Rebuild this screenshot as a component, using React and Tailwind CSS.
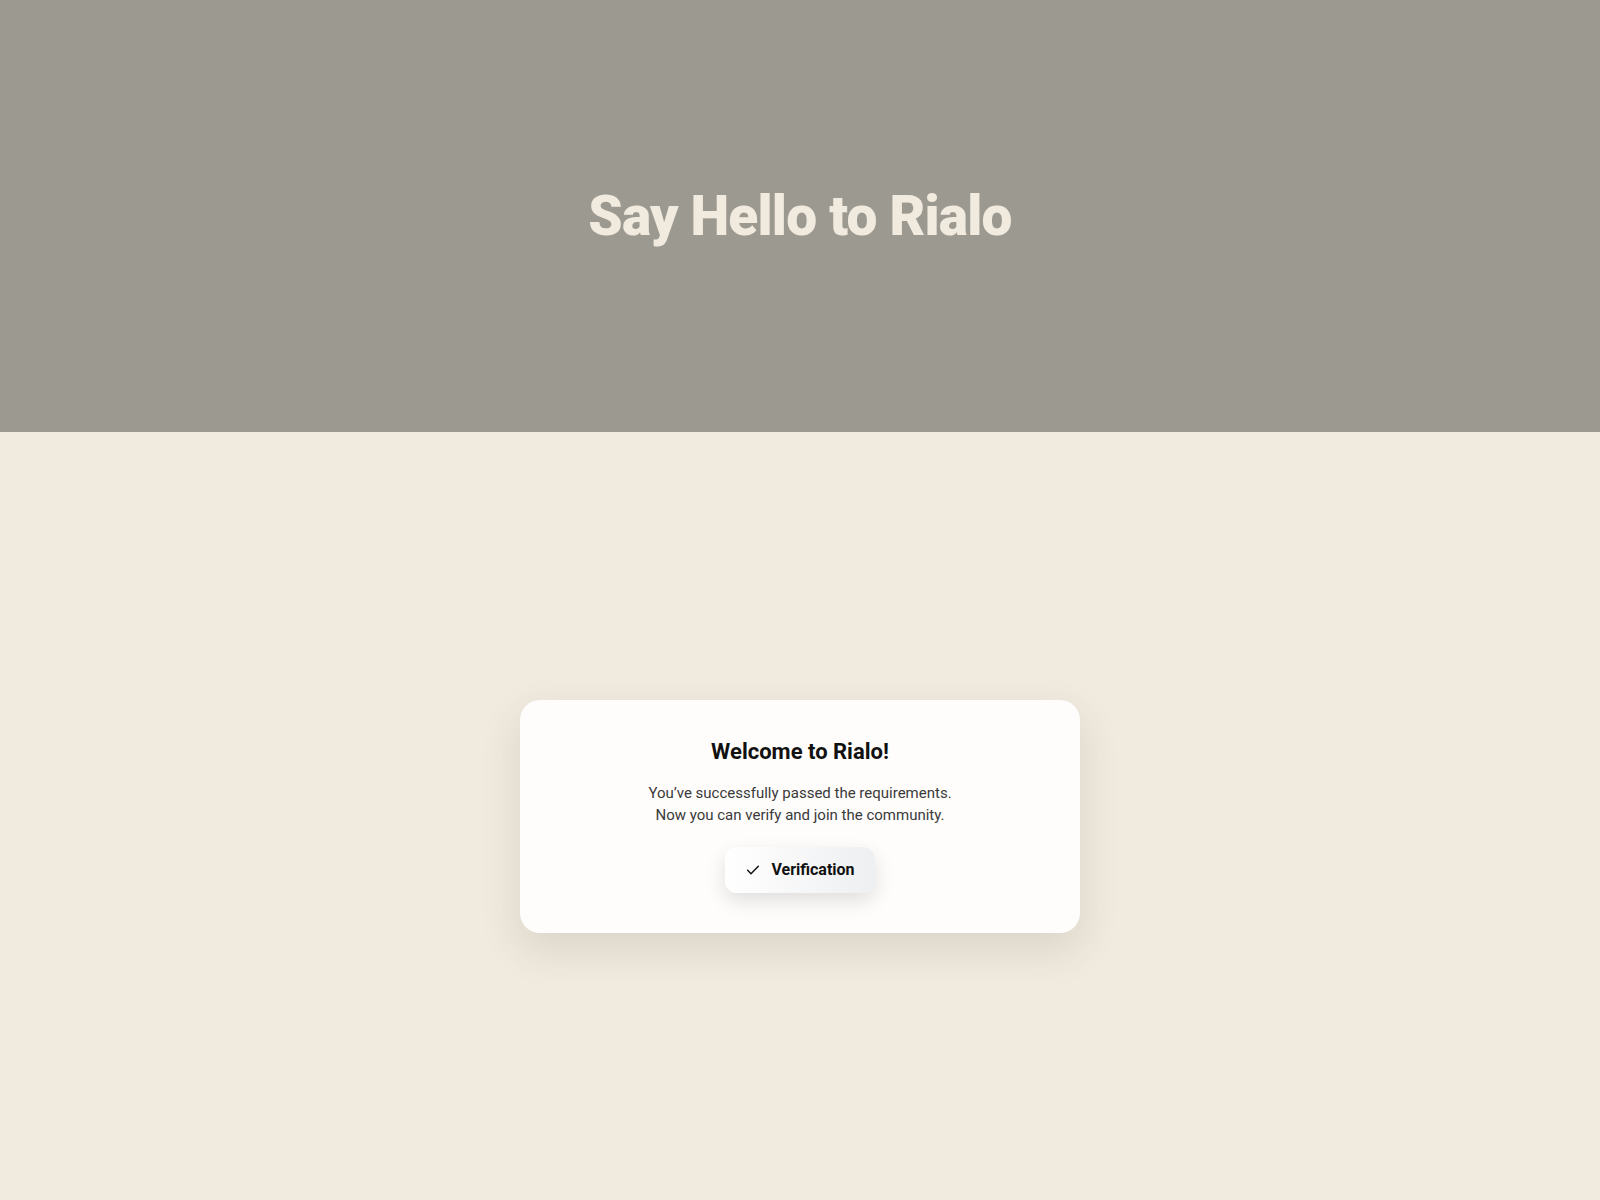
import React from "react";

export default function App() {
  return (
    <div className="min-h-screen h-[1200px] flex flex-col bg-[#f0eadf]" style={{ fontFamily: "Roboto, 'Liberation Sans', sans-serif" }}>
      <header className="h-[432px] shrink-0 bg-[#9c9991] flex items-center justify-center">
        <h1 className="text-[55px] font-black tracking-[-0.8px] text-[#f0eadf] leading-none">Say Hello to Rialo</h1>
      </header>
      <main className="flex-1 flex items-center justify-center">
        <div className="w-[560px] bg-[#fefdfb] rounded-[20px] px-10 pt-[38px] pb-10 flex flex-col items-center text-center shadow-[0_16px_40px_rgba(90,80,60,0.14)]">
          <h2 className="text-[22px] leading-[28px] font-bold text-[#111111]">Welcome to Rialo!</h2>
          <p className="mt-4 text-[15px] leading-[22.5px] text-[#3a3a3a]">
            You’ve successfully passed the requirements.
            <br />
            Now you can verify and join the community.
          </p>
          <button className="mt-5 h-[46px] px-5 rounded-[12px] flex items-center gap-[10px] bg-gradient-to-r from-white to-[#eeeff1] shadow-[0_8px_20px_rgba(0,0,0,0.12)] text-[16px] font-bold text-[#111111]">
            <svg width="16" height="16" viewBox="0 0 24 24" fill="none" stroke="#111" strokeWidth="2.2" strokeLinecap="round" strokeLinejoin="round">
              <path d="M4 12.5l5 5L20 6.5" />
            </svg>
            Verification
          </button>
        </div>
      </main>
    </div>
  );
}
